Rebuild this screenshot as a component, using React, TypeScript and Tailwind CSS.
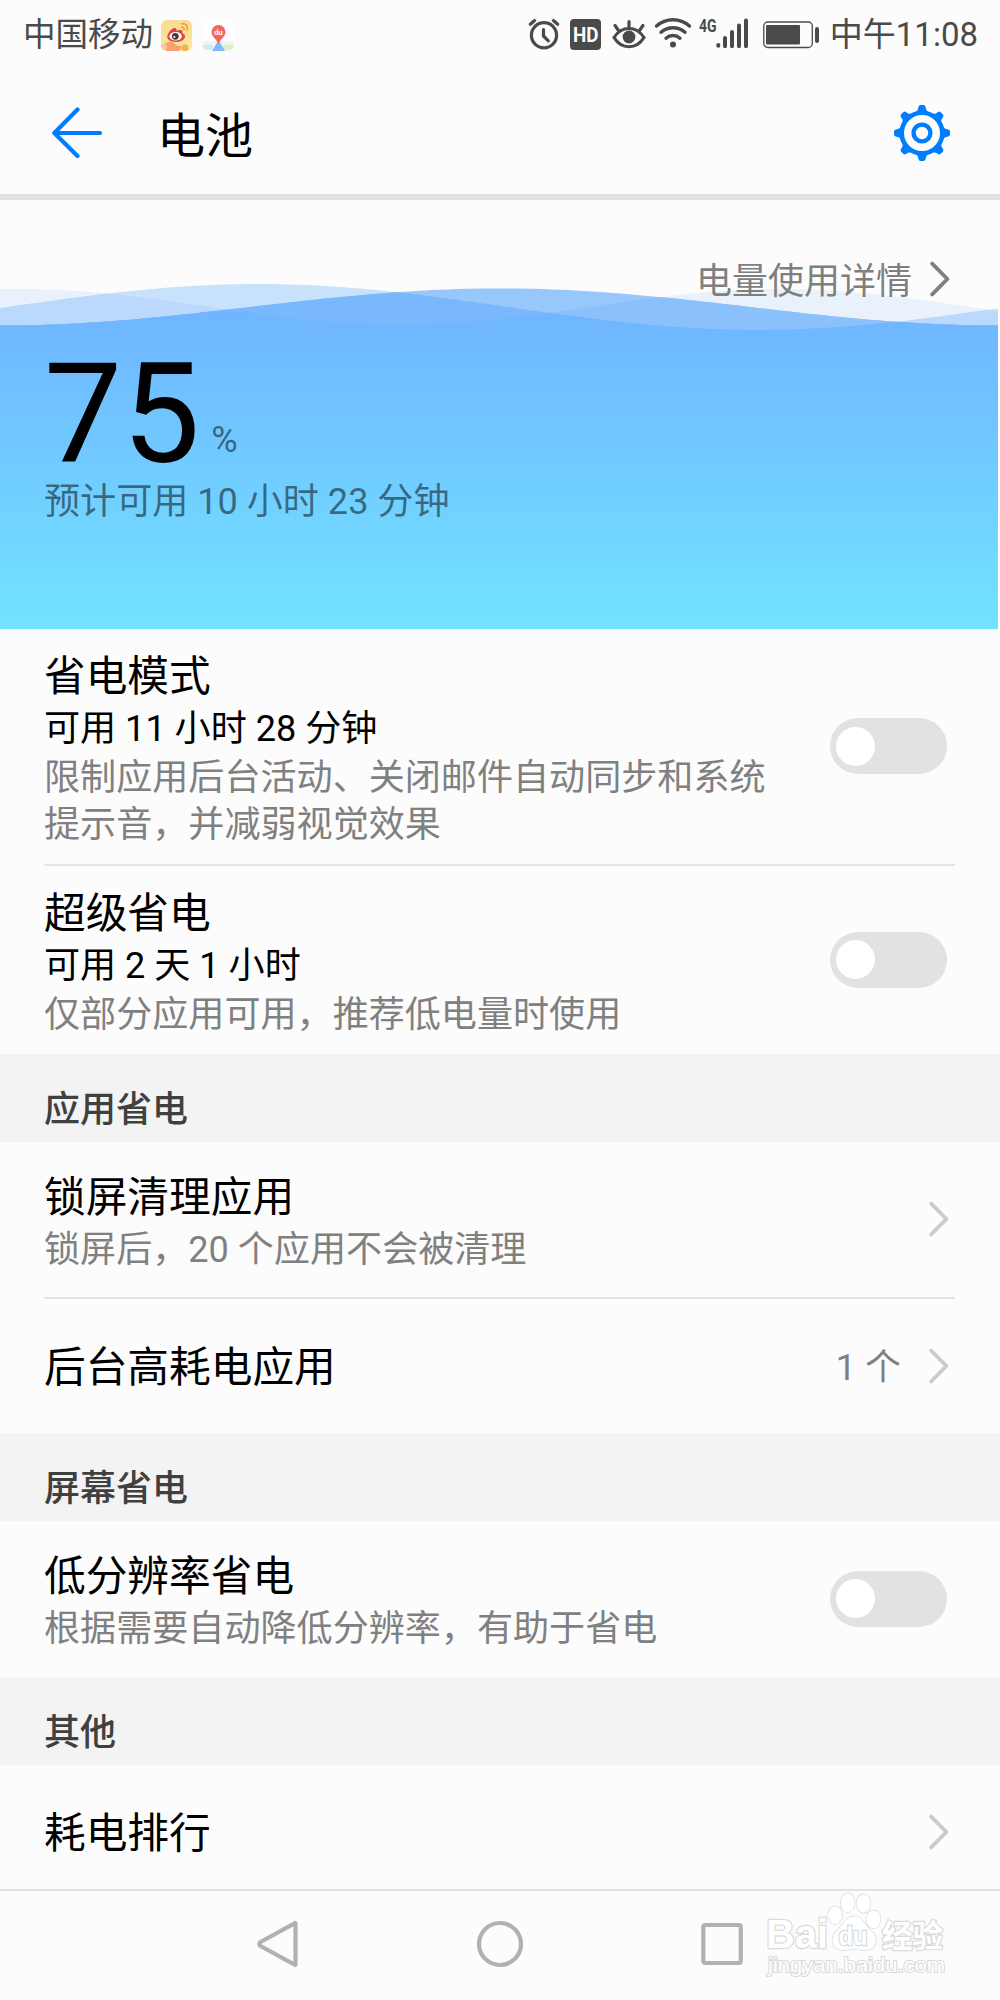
import React, { useState } from "react";

// sampled wave outline, closed along the bottom of the panel
const wavePath = (fn: (x: number) => number) => {
  let d = "";
  for (let x = 0; x <= 998; x += 8) {
    d += `${x === 0 ? "M" : "L"}${x} ${fn(x).toFixed(2)}`;
  }
  return `${d}L998 ${fn(998).toFixed(2)}L998 429L0 429Z`;
};

const TAU = Math.PI * 2;
const frontWave = wavePath((x) => 107 + 18.6 * Math.cos((TAU * x) / 1000));
const midWave = wavePath((x) => 107 - 23 * Math.sin((TAU * (x - 8)) / 1000));
const backWave = wavePath((x) => 107 - 18 * Math.cos((TAU * (x - 20)) / 760));

function Waves() {
  return (
    <svg
      className="absolute left-0 top-0"
      width="998"
      height="429"
      viewBox="0 0 998 429"
    >
      <defs>
        <linearGradient
          id="water"
          gradientUnits="userSpaceOnUse"
          x1="0"
          y1="100"
          x2="0"
          y2="429"
        >
          <stop offset="0" stopColor="#6fb3ff" />
          <stop offset="1" stopColor="#72e3ff" />
        </linearGradient>
        <clipPath id="mid">
          <path d={midWave} />
        </clipPath>
        <clipPath id="back">
          <path d={backWave} />
        </clipPath>
      </defs>
      <path d={backWave} fill="#e8f1fc" />
      <path d={midWave} fill="#c9e2fc" />
      <path d={midWave} fill="#bad9fd" clipPath="url(#back)" />
      <path d={frontWave} fill="#98c8fb" />
      <path d={frontWave} fill="#8ac0fc" clipPath="url(#back)" />
      <path d={frontWave} fill="#7ab8fe" clipPath="url(#mid)" />
      <g clipPath="url(#mid)">
        <path d={frontWave} fill="url(#water)" clipPath="url(#back)" />
      </g>
    </svg>
  );
}

function Chevron({ className }: { className: string }) {
  return (
    <svg
      className={className}
      width="20"
      height="36"
      viewBox="0 0 20 36"
      fill="none"
      stroke="currentColor"
      strokeWidth="3.8"
      strokeLinecap="round"
      strokeLinejoin="round"
    >
      <path d="M2.2 2.6 L17.4 18 L2.2 33.4" />
    </svg>
  );
}

function Toggle() {
  const [on, setOn] = useState(false);
  return (
    <button
      role="switch"
      aria-checked={on}
      onClick={() => setOn(!on)}
      className={`flex h-14 w-[117px] shrink-0 items-center rounded-full px-[5.5px] ${
        on ? "justify-end bg-[#007dff]" : "justify-start bg-[#e2e2e2]"
      }`}
    >
      <span className="size-[39px] rounded-full bg-white" />
    </button>
  );
}

function StatusBar() {
  return (
    <div className="flex h-[70px] shrink-0 items-center pl-[23px] pr-[22px] text-[33px] text-[#4a4a4a]">
      <span className="text-[32.5px] leading-[70px]">中国移动</span>
      {/* weibo */}
      <svg className="ml-2" width="31" height="31" viewBox="0 0 31 31">
        <defs>
          <linearGradient id="wb" x1="0" y1="0" x2="0" y2="1">
            <stop offset="0" stopColor="#f9dc92" />
            <stop offset="1" stopColor="#fde79a" />
          </linearGradient>
          <clipPath id="wbClip">
            <rect width="31" height="31" rx="6" />
          </clipPath>
        </defs>
        <g clipPath="url(#wbClip)">
          <rect width="31" height="31" fill="url(#wb)" />
          <path d="M3 25c3-4 8-4 11-1s5 1 7 3l-3 4H5z" fill="#f9a06f" />
          <circle cx="3" cy="27" r="3.2" fill="#fbc4a0" />
          <circle cx="24" cy="28" r="3.4" fill="#f6b04e" />
          <path
            d="M7 14c2-4 6-7 8-5.5.8.6.6 1.5.3 2.500 2-1 5-1.400 6 0 .5.8.2 1.500 0 2.300 2 .7 3 2 2.700 3.700C23.300 20 19.500 22 14.500 22 10 22 6.300 20 6.300 16.800 6.300 15.800 6.500 15 7 14z"
            fill="#e5413f"
          />
          <ellipse cx="14.600" cy="16.300" rx="6.200" ry="4.300" fill="#fff" />
          <circle cx="14.300" cy="16.300" r="3.400" fill="#3f3a3c" />
          <circle cx="13.300" cy="17" r="1.100" fill="#fff" />
          <g fill="none" stroke="#f4a23c" strokeWidth="1.7" strokeLinecap="round">
            <path d="M20.500 3.700c4-.7 6.800 2.400 5.700 6.700" />
            <path d="M20.700 7.200c1.700-.3 2.700.9 2.300 2.600" />
          </g>
        </g>
      </svg>
      {/* baidu map */}
      <svg className="ml-[11px]" width="31" height="31" viewBox="0 0 31 31">
        <rect width="31" height="31" rx="6" fill="#fff" />
        <path d="M0 21h31v4a6 6 0 0 1-6 6H6a6 6 0 0 1-6-6z" fill="#f3f3f3" />
        <ellipse cx="5" cy="27" rx="5" ry="2.6" fill="#c4edfa" />
        <ellipse cx="25" cy="27" rx="5" ry="2.6" fill="#d6f3c0" />
        <path d="M15.500 20 L22 31 H9 Z" fill="#84b6fb" />
        <path
          d="M15.500 24 C14 19.500 8.500 17 8.500 12a7 7 0 0 1 14 0C22.500 17 17 19.500 15.500 24z"
          fill="#f2695f"
        />
        <text
          x="15.5"
          y="15"
          textAnchor="middle"
          fontSize="7.5"
          fontWeight="700"
          fill="#fff"
        >
          du
        </text>
      </svg>

      <div className="ml-auto flex items-center">
        {/* alarm */}
        <svg
          width="32"
          height="36"
          viewBox="0 0 32 36"
          fill="none"
          stroke="currentColor"
          strokeWidth="3.2"
          strokeLinecap="round"
        >
          <circle cx="16" cy="18.3" r="12.6" />
          <path d="M15.500 12.500v6.500l4.800 4.800" />
          <path d="M2.300 7.200 L6.600 3.600M29.700 7.200 L25.400 3.600" />
        </svg>
        {/* hd */}
        <svg className="ml-2.5" width="31" height="36" viewBox="0 0 31 36">
          <rect y="2" width="31" height="31" rx="4" fill="currentColor" />
          <text
            x="3"
            y="24.5"
            fontSize="19.5"
            fontWeight="700"
            textLength="25.5"
            lengthAdjust="spacingAndGlyphs"
            fill="#fcfcfc"
          >
            HD
          </text>
        </svg>
        {/* eye comfort */}
        <svg
          className="ml-[11px]"
          width="34"
          height="36"
          viewBox="0 0 34 36"
          fill="none"
          stroke="currentColor"
          strokeWidth="3.2"
          strokeLinecap="round"
        >
          <path d="M2 20.500C9.500 8.500 24.500 8.500 32 20.500C24.500 32.800 9.500 32.800 2 20.500z" />
          <circle cx="17" cy="20" r="6.4" fill="currentColor" stroke="none" />
          <path d="M17 4.500v6M3 8.500l3.500 5M31 8.500l-3.500 5" />
        </svg>
        {/* wifi */}
        <svg
          className="ml-2"
          width="38"
          height="36"
          viewBox="0 0 38 36"
          fill="none"
          stroke="currentColor"
          strokeWidth="3.4"
          strokeLinecap="round"
        >
          <path d="M2.500 9C12 .6 26 .6 35.500 9" />
          <path d="M7 15.200c7-6 17-6 24 0" />
          <path d="M12 21.200c4-3.600 10-3.600 14 0" />
          <circle cx="19" cy="27.5" r="3" fill="currentColor" stroke="none" />
        </svg>
        {/* signal */}
        <svg
          className="ml-[7px] overflow-visible"
          width="50"
          height="36"
          viewBox="0 0 50 36"
          fill="none"
          stroke="currentColor"
          strokeWidth="4"
          strokeLinecap="round"
        >
          <text
            x="0"
            y="14.5"
            fontSize="18.5"
            fontWeight="700"
            textLength="17.5"
            lengthAdjust="spacingAndGlyphs"
            fill="currentColor"
            stroke="none"
          >
            4G
          </text>
          <path d="M19.300 28.800v-.8M26 29.200V21M33 29.200V15M40 29.200V8.500M47 29.200V3.500" />
        </svg>
        {/* battery */}
        <svg className="ml-[14px]" width="57" height="36" viewBox="0 0 57 36">
          <rect
            x="0.8"
            y="5"
            width="48.5"
            height="25.5"
            rx="4"
            fill="none"
            stroke="currentColor"
            strokeWidth="1.3"
          />
          <rect x="3" y="8" width="34" height="19.5" rx="1" fill="currentColor" />
          <rect x="52" y="10" width="4" height="16" rx="2" fill="currentColor" />
        </svg>
        <span className="ml-2.5 leading-[70px]">中午11:08</span>
      </div>
    </div>
  );
}

function Header() {
  return (
    <header className="flex h-[130px] shrink-0 items-center border-b-[6px] border-[#e2e2e2] pl-[51px] pr-[50px]">
      <svg
        className="text-[#007dff]"
        width="52"
        height="52"
        viewBox="0 0 52 52"
        fill="none"
        stroke="currentColor"
        strokeWidth="4.2"
        strokeLinecap="round"
        strokeLinejoin="round"
      >
        <path d="M26.500 3.500 L3.300 27 L26.500 50M3.300 27H49" />
      </svg>
      <h1 className="ml-[54px] mt-2.5 text-[48px] leading-[60px] text-black">
        电池
      </h1>
      <svg
        className="ml-auto mt-px text-[#007dff]"
        width="56"
        height="56"
        viewBox="-28 -28 56 56"
      >
        <circle r="20.3" fill="none" stroke="currentColor" strokeWidth="4.6" />
        <circle r="8.4" fill="none" stroke="currentColor" strokeWidth="4.4" />
        {[0, 45, 90, 135, 180, 225, 270, 315].map((deg) => (
          <path
            key={deg}
            transform={`rotate(${deg})`}
            d="M-6.500 -21 C-4.500 -22 -4 -23.500 -3.500 -26.300 Q-3.200 -28 -1.500 -28 H1.500 Q3.200 -28 3.500 -26.300 C4 -23.500 4.500 -22 6.500 -21Z"
            fill="currentColor"
          />
        ))}
      </svg>
    </header>
  );
}

function SectionTitle({ children }: { children: React.ReactNode }) {
  return (
    <h2 className="h-[88px] shrink-0 bg-[#f3f3f3] pl-11 pt-[33px] text-[36px] font-medium leading-[47px] text-[#404040]">
      {children}
    </h2>
  );
}

type RowProps = {
  title: string;
  time?: string;
  desc?: string;
  right: React.ReactNode;
  className: string;
};

function Row({ title, time, desc, right, className }: RowProps) {
  return (
    <div
      className={`ml-11 mr-[45px] flex shrink-0 items-center justify-between pr-2 ${className}`}
    >
      <div className="pt-[5px]">
        <h3 className="text-[41.7px] leading-[56px] text-black">{title}</h3>
        {time && (
          <p className="mb-0.5 mt-px text-[36.1px] leading-[47px] text-black">
            {time}
          </p>
        )}
        {desc && (
          <p className="mt-px w-[725px] text-[36.1px] leading-[47px] text-[#808080]">
            {desc}
          </p>
        )}
      </div>
      {right}
    </div>
  );
}

function Watermark() {
  return (
    <svg
      className="absolute bottom-[5px] right-[30px]"
      width="220"
      height="110"
      viewBox="0 0 220 110"
      fill="#fff"
      stroke="#dadada"
      strokeWidth="2.4"
      paintOrder="stroke"
      fontFamily='"Liberation Sans", "Noto Sans CJK SC", sans-serif'
      fontWeight="700"
    >
      <text x="16" y="63" fontSize="40" textLength="62" lengthAdjust="spacingAndGlyphs">
        Bai
      </text>
      <g strokeWidth="1.4">
        <ellipse cx="85" cy="30.3" rx="7" ry="9" />
        <ellipse cx="97.7" cy="17.7" rx="7" ry="9.5" />
        <ellipse cx="113.5" cy="18.5" rx="7" ry="9.3" />
        <ellipse cx="123.5" cy="34.3" rx="7" ry="9" />
        <path d="M104 31.500c-9 0-10 8-17 14-7 7-6 19 5 19.500 5 0 8-1 12-1s7 1 12 1c11-.5 13-12.500 5-19.500-7-6-8-14-17-14z" />
      </g>
      <text x="88.5" y="60" fontSize="26" textLength="29" lengthAdjust="spacingAndGlyphs">
        du
      </text>
      <text x="132" y="61.5" fontSize="31" textLength="61" lengthAdjust="spacingAndGlyphs">
        经验
      </text>
      <text
        x="18"
        y="87"
        fontSize="20"
        fontWeight="400"
        strokeWidth="2"
        textLength="177"
        lengthAdjust="spacingAndGlyphs"
      >
        jingyan.baidu.com
      </text>
    </svg>
  );
}

function NavBar() {
  return (
    <nav className="relative flex h-[111px] shrink-0 items-center justify-center gap-[174px] border-t-2 border-[#e2e2e2] pb-[3px] text-[#b1b1b1]">
      <svg
        width="48"
        height="48"
        viewBox="0 0 48 48"
        fill="none"
        stroke="currentColor"
        strokeWidth="4.2"
        strokeLinejoin="round"
      >
        <path d="M41.500 3.500V44.500Q41.500 45.500 40.500 44.700L6.500 26Q4 24 6.500 22L40.500 3.300Q41.500 2.500 41.500 3.500Z" />
      </svg>
      <svg
        width="48"
        height="48"
        viewBox="0 0 48 48"
        fill="none"
        stroke="currentColor"
        strokeWidth="4.2"
      >
        <circle cx="24" cy="24" r="21" />
      </svg>
      <svg
        width="48"
        height="48"
        viewBox="0 0 48 48"
        fill="none"
        stroke="currentColor"
        strokeWidth="4.2"
      >
        <rect x="5.3" y="5" width="37.5" height="38" rx="2" />
      </svg>
      <Watermark />
    </nav>
  );
}

export default function App() {
  const arrow = <Chevron className="-mr-[2px] text-[#cbcbcb]" />;

  return (
    <div className="flex h-[2000px] w-[1000px] flex-col overflow-hidden bg-[#fcfcfc] font-[Roboto,'Noto_Sans_CJK_SC',sans-serif]">
      <StatusBar />
      <Header />

      <main className="flex min-h-0 flex-1 flex-col overflow-hidden">
        <section className="relative h-[428.5px] shrink-0">
          <Waves />
          <div className="relative flex flex-col pl-11 pr-[45px]">
            <a className="mr-[5px] mt-[53px] flex items-center self-end text-[36px] leading-[46px] text-[#7f7f7f]">
              <span className="mt-1.5">电量使用详情</span>
              <Chevron className="ml-[18px]" />
            </a>
            <div className="mt-[41px] flex items-baseline">
              <span className="text-[139px] leading-[138px] text-black">75</span>
              <span className="relative -top-2.5 ml-[11px] text-[36px] text-black/50">
                %
              </span>
            </div>
            <p className="-mt-[5px] text-[36.1px] leading-[47px] text-black/50">
              预计可用 10 小时 23 分钟
            </p>
          </div>
        </section>

        <Row
          className="h-[237.5px] border-b-2 border-[#e4e4e4]"
          title="省电模式"
          time="可用 11 小时 28 分钟"
          desc="限制应用后台活动、关闭邮件自动同步和系统提示音，并减弱视觉效果"
          right={<Toggle />}
        />
        <Row
          className="h-[187.5px]"
          title="超级省电"
          time="可用 2 天 1 小时"
          desc="仅部分应用可用，推荐低电量时使用"
          right={<Toggle />}
        />

        <SectionTitle>应用省电</SectionTitle>
        <Row
          className="h-[157px] border-b-2 border-[#e4e4e4]"
          title="锁屏清理应用"
          desc="锁屏后，20 个应用不会被清理"
          right={arrow}
        />
        <Row
          className="h-[134.5px]"
          title="后台高耗电应用"
          right={
            <span className="flex items-center text-[36px] leading-[47px] text-[#7f7f7f]">
              <span className="mr-[28px] mt-1.5">1 个</span>
              {arrow}
            </span>
          }
        />

        <SectionTitle>屏幕省电</SectionTitle>
        <Row
          className="h-[155.5px]"
          title="低分辨率省电"
          desc="根据需要自动降低分辨率，有助于省电"
          right={<Toggle />}
        />

        <SectionTitle>其他</SectionTitle>
        <Row className="h-[134px]" title="耗电排行" right={arrow} />
      </main>

      <NavBar />
    </div>
  );
}
